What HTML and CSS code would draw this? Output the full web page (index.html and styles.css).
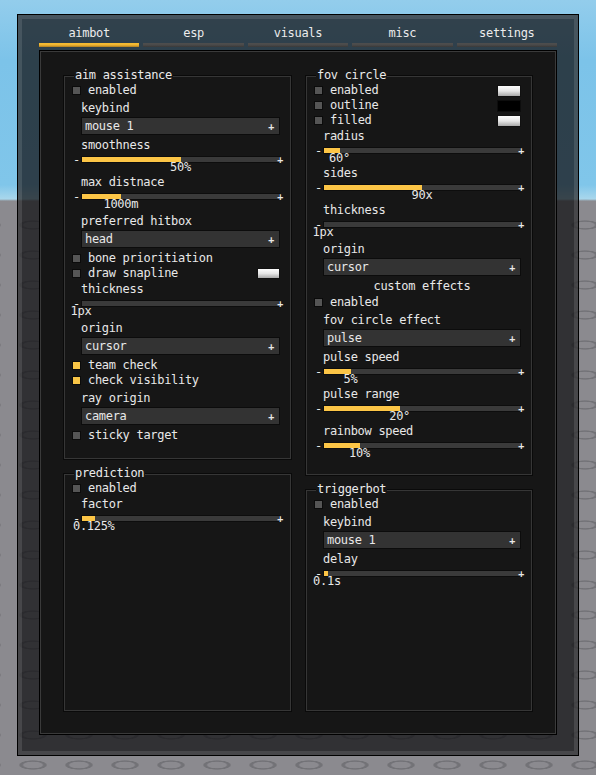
FILE: index.html
```html
<!DOCTYPE html>
<html>
<head>
<meta charset="utf-8">
<link rel="stylesheet" href="styles.css">
</head>
<body>
<div class="window">
  <div class="tabs">
    <div class="tab active"><span>aimbot</span><i></i></div>
    <div class="tab"><span>esp</span><i></i></div>
    <div class="tab"><span>visuals</span><i></i></div>
    <div class="tab"><span>misc</span><i></i></div>
    <div class="tab"><span>settings</span><i></i></div>
  </div>
  <div class="content">
    <div class="col">
      <section class="box box-aim">
        <div class="box-title">aim assistance</div>
        <div class="check"><i class="cb"></i><span>enabled</span></div>
        <div class="label dd">keybind</div>
        <div class="dropdown"><span>mouse 1</span><span class="plus">+</span></div>
        <div class="label">smoothness</div>
        <div class="slider"><div class="track-row"><span class="minus">-</span><div class="track"><div class="fill" style="width:50%"></div></div><span class="splus">+</span></div><div class="value"><span style="margin-left:50%">50%</span></div></div>
        <div class="label">max distnace</div>
        <div class="slider"><div class="track-row"><span class="minus">-</span><div class="track"><div class="fill" style="width:20%"></div></div><span class="splus">+</span></div><div class="value"><span style="margin-left:20%">1000m</span></div></div>
        <div class="label dd">preferred hitbox</div>
        <div class="dropdown"><span>head</span><span class="plus">+</span></div>
        <div class="check"><i class="cb"></i><span>bone prioritiation</span></div>
        <div class="check"><i class="cb"></i><span>draw snapline</span><i class="swatch white small"></i></div>
        <div class="label">thickness</div>
        <div class="slider"><div class="track-row"><span class="minus">-</span><div class="track"><div class="fill" style="width:0%"></div></div><span class="splus">+</span></div><div class="value"><span style="margin-left:0%">1px</span></div></div>
        <div class="label dd">origin</div>
        <div class="dropdown"><span>cursor</span><span class="plus">+</span></div>
        <div class="check"><i class="cb on"></i><span>team check</span></div>
        <div class="check"><i class="cb on"></i><span>check visibility</span></div>
        <div class="label dd">ray origin</div>
        <div class="dropdown"><span>camera</span><span class="plus">+</span></div>
        <div class="check"><i class="cb"></i><span>sticky target</span></div>
      </section>
      <section class="box box-grow">
        <div class="box-title">prediction</div>
        <div class="check"><i class="cb"></i><span>enabled</span></div>
        <div class="label">factor</div>
        <div class="slider"><div class="track-row"><span class="minus">-</span><div class="track"><div class="fill" style="width:6.4%"></div></div><span class="splus">+</span></div><div class="value"><span style="margin-left:6.4%">0.125%</span></div></div>
      </section>
    </div>
    <div class="col">
      <section class="box box-fov">
        <div class="box-title">fov circle</div>
        <div class="check"><i class="cb"></i><span>enabled</span><i class="swatch white"></i></div>
        <div class="check"><i class="cb"></i><span>outline</span><i class="swatch black"></i></div>
        <div class="check"><i class="cb"></i><span>filled</span><i class="swatch white"></i></div>
        <div class="label">radius</div>
        <div class="slider"><div class="track-row"><span class="minus">-</span><div class="track"><div class="fill" style="width:8.3%"></div></div><span class="splus">+</span></div><div class="value"><span style="margin-left:8.3%">60°</span></div></div>
        <div class="label">sides</div>
        <div class="slider"><div class="track-row"><span class="minus">-</span><div class="track"><div class="fill" style="width:50%"></div></div><span class="splus">+</span></div><div class="value"><span style="margin-left:50%">90x</span></div></div>
        <div class="label">thickness</div>
        <div class="slider"><div class="track-row"><span class="minus">-</span><div class="track"><div class="fill" style="width:0%"></div></div><span class="splus">+</span></div><div class="value"><span style="margin-left:0%">1px</span></div></div>
        <div class="label dd">origin</div>
        <div class="dropdown"><span>cursor</span><span class="plus">+</span></div>
        <div class="label center">custom effects</div>
        <div class="check"><i class="cb"></i><span>enabled</span></div>
        <div class="label dd">fov circle effect</div>
        <div class="dropdown"><span>pulse</span><span class="plus">+</span></div>
        <div class="label">pulse speed</div>
        <div class="slider"><div class="track-row"><span class="minus">-</span><div class="track"><div class="fill" style="width:13.9%"></div></div><span class="splus">+</span></div><div class="value"><span style="margin-left:13.9%">5%</span></div></div>
        <div class="label">pulse range</div>
        <div class="slider"><div class="track-row"><span class="minus">-</span><div class="track"><div class="fill" style="width:38.7%"></div></div><span class="splus">+</span></div><div class="value"><span style="margin-left:38.7%">20°</span></div></div>
        <div class="label">rainbow speed</div>
        <div class="slider"><div class="track-row"><span class="minus">-</span><div class="track"><div class="fill" style="width:18.4%"></div></div><span class="splus">+</span></div><div class="value"><span style="margin-left:18.4%">10%</span></div></div>
      </section>
      <section class="box box-grow">
        <div class="box-title">triggerbot</div>
        <div class="check"><i class="cb"></i><span>enabled</span></div>
        <div class="label dd">keybind</div>
        <div class="dropdown"><span>mouse 1</span><span class="plus">+</span></div>
        <div class="label">delay</div>
        <div class="slider"><div class="track-row"><span class="minus">-</span><div class="track"><div class="fill" style="width:2%"></div></div><span class="splus">+</span></div><div class="value"><span style="margin-left:2%">0.1s</span></div></div>
      </section>
    </div>
  </div>
</div>
</body>
</html>
```

FILE: styles.css
```css
html, body {
  margin: 0;
  padding: 0;
}
body {
  width: 596px;
  height: 775px;
  overflow: hidden;
  font-family: "DejaVu Sans Mono", "Liberation Mono", monospace;
  font-size: 12px;
  letter-spacing: -0.3px;
  color: #e8e8e8;
  background:
    linear-gradient(to bottom, #93cdec 0px, #7cc3e9 60px, #80c6ea 185px, #a9d7ec 199px, rgba(0,0,0,0) 201px),
    radial-gradient(ellipse 15px 5px at 50% 50%, rgba(0,0,0,0) 60%, rgba(70,70,74,0.35) 72%, rgba(70,70,74,0.35) 86%, rgba(0,0,0,0) 97%) 10px 0 / 46px 30px repeat,
    #8b8a8f;
}
.window {
  box-sizing: border-box;
  width: 562px;
  height: 742px;
  margin: 14px 0 0 17px;
  border: 1px solid #000;
  background: rgba(18, 18, 20, 0.74);
  box-shadow: inset 0 0 0 4px rgba(255, 255, 255, 0.11);
  padding: 10px 21px 0 21px;
}
.tabs {
  display: grid;
  grid-template-columns: repeat(5, 1fr);
  column-gap: 4px;
}
.tab {
  display: flex;
  flex-direction: column;
  text-align: center;
}
.tab span {
  line-height: 16px;
  height: 16px;
  color: #ececec;
}
.tab i {
  display: block;
  height: 4px;
  margin-top: 2px;
  background: linear-gradient(to bottom, #4e4e4e 0, #4a4a4a 50%, #383838 100%);
}
.tab.active i {
  background: linear-gradient(to bottom, #f6bd34 0, #f0b530 50%, #a97a22 100%);
}
.content {
  box-sizing: border-box;
  height: 685px;
  margin-top: 3px;
  border: 1px solid #000;
  box-shadow: inset 0 0 0 1px #3a3a3a;
  background: #161616;
  padding: 24px 23px 22px 23px;
  display: grid;
  grid-template-columns: 229px 228px;
  column-gap: 13px;
}
.col {
  display: flex;
  flex-direction: column;
  gap: 13px;
  min-height: 0;
}
.box {
  box-sizing: border-box;
  border: 1px solid #0a0a0a;
  box-shadow: inset 0 0 0 1px #363636;
  background: #161616;
  padding: 0 11px 0 8px;
  display: flex;
  flex-direction: column;
}
.box-aim { height: 385px; }
.box-fov { height: 401px; }
.box-grow { flex: 1; }
.box-title {
  align-self: flex-start;
  margin: -8px 0 0 2px;
  padding: 0 1px;
  line-height: 15px;
  height: 15px;
  background: #161616;
  color: #ebebeb;
}
.check {
  display: flex;
  align-items: center;
  height: 15px;
  line-height: 15px;
}
.cb {
  box-sizing: border-box;
  width: 9px;
  height: 9px;
  border: 1px solid #0b0b0b;
  background: #555555;
  margin-right: 7px;
  flex: none;
}
.cb.on {
  background: #f8c546;
}
.swatch {
  box-sizing: border-box;
  margin-left: auto;
  width: 24px;
  height: 12px;
  border: 1px solid #111;
  flex: none;
}
.swatch.small {
  width: 23px;
  height: 11px;
}
.swatch.white {
  background: linear-gradient(to bottom, #fdfdfd 0, #e6e6e6 50%, #a9a9a9 100%);
}
.swatch.black {
  background: #000;
  border-color: #0d0d0d;
}
.label {
  padding: 1px 0 1px 9px;
  line-height: 15px;
  height: 15px;
}
.label.dd {
  padding-top: 3px;
}
.label.center {
  text-align: center;
}
.dropdown {
  box-sizing: border-box;
  margin: 0 0 2px 9px;
  height: 18px;
  border: 1px solid #0c0c0c;
  background: #333333;
  display: flex;
  align-items: center;
  padding: 0 5px 0 3px;
  line-height: 15px;
}
.dropdown + .check {
  margin-top: 1px;
}
.plus {
  margin-left: auto;
  font-size: 10px;
  font-weight: bold;
  line-height: 10px;
  padding-top: 2px;
}
.slider {
  padding: 2px 0 2px 0;
}
.track-row {
  position: relative;
  display: flex;
  align-items: center;
  height: 7px;
}
.minus {
  width: 9px;
  flex: none;
  height: 7px;
  line-height: 7px;
  font-size: 12px;
  transform: translate(1px, 1px);
}
.track {
  box-sizing: border-box;
  flex: 1;
  height: 7px;
  border: 1px solid #0d0d0d;
  background: #3a3a3a;
}
.fill {
  height: 100%;
  background: #fcc546;
}
.splus {
  position: absolute;
  right: -3px;
  top: 0;
  font-size: 10px;
  font-weight: bold;
  line-height: 8px;
}
.value {
  margin-left: 9px;
  height: 9px;
  line-height: 9px;
  white-space: nowrap;
}
.value span {
  display: inline-block;
  transform: translateX(-50%);
}
```
